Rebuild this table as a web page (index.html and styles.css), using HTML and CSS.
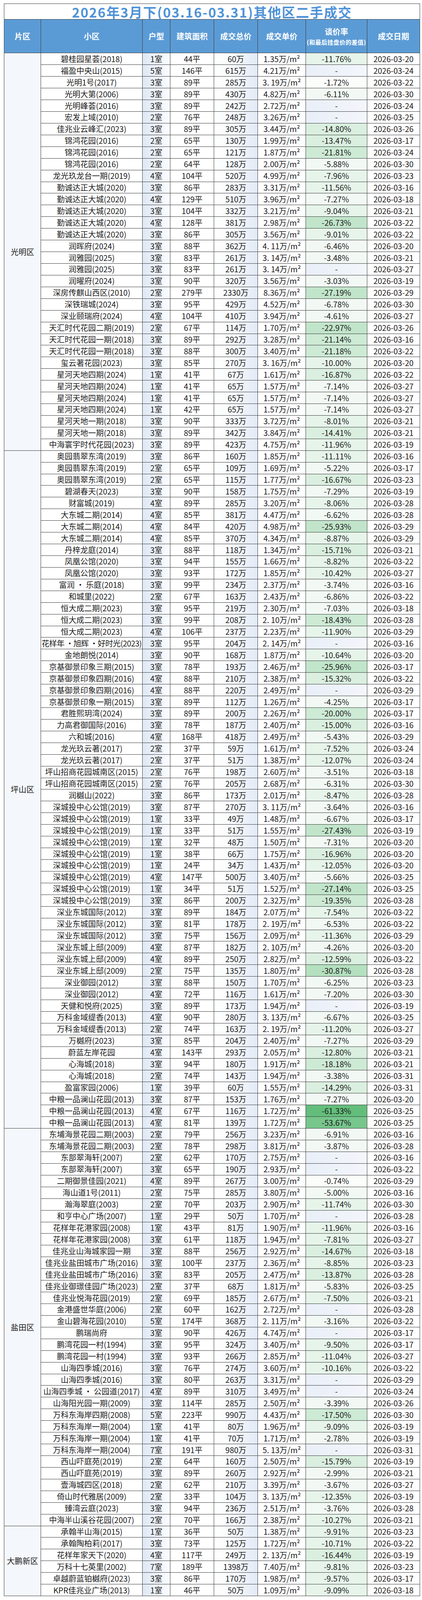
FILE: index.html
```html
<!DOCTYPE html>
<html lang="zh-CN">
<head>
<meta charset="utf-8">
<title>2026年3月下(03.16-03.31)其他区二手成交</title>
<link rel="stylesheet" href="styles.css">
</head>
<body>
<div class="sheet">
  <div class="title">2026年3月下(03.16-03.31)其他区二手成交</div>
  <div class="head">
    <div>片区</div><div>小区</div><div>户型</div><div>建筑面积</div><div>成交总价</div><div>成交单价</div>
    <div class="rate-h"><span>谈价率</span><small>(和最后挂盘价的差值)</small></div>
    <div>成交日期</div>
  </div>

  <section class="group">
    <div class="area">光明区</div>
    <div class="rows">
      <div class="row"><span>碧桂园星荟(2018)</span><span>1室</span><span>44平</span><span>60万</span><span>1.35万/m²</span><span class="d10">-11.76%</span><span>2026-03-20</span></div>
      <div class="row"><span>福盈中央山(2015)</span><span>5室</span><span>146平</span><span>615万</span><span>4.21万/m²</span><span class="na">-</span><span>2026-03-24</span></div>
      <div class="row"><span>光明1号(2017)</span><span>3室</span><span>89平</span><span>285万</span><span>3. 19万/m²</span><span class="d0">-1.72%</span><span>2026-03-22</span></div>
      <div class="row"><span>光明大第(2006)</span><span>3室</span><span>89平</span><span>430万</span><span>4.82万/m²</span><span class="d5">-6.11%</span><span>2026-03-30</span></div>
      <div class="row"><span>光明峰荟(2016)</span><span>3室</span><span>89平</span><span>242万</span><span>2.72万/m²</span><span class="na">-</span><span>2026-03-24</span></div>
      <div class="row"><span>宏发上域(2010)</span><span>2室</span><span>76平</span><span>248万</span><span>3.26万/m²</span><span class="na">-</span><span>2026-03-25</span></div>
      <div class="row"><span>佳兆业云峰汇(2023)</span><span>3室</span><span>89平</span><span>305万</span><span>3.44万/m²</span><span class="d15">-14.80%</span><span>2026-03-26</span></div>
      <div class="row"><span>锦鸿花园(2016)</span><span>2室</span><span>65平</span><span>130万</span><span>1.99万/m²</span><span class="d15">-13.47%</span><span>2026-03-17</span></div>
      <div class="row"><span>锦鸿花园(2016)</span><span>2室</span><span>65平</span><span>121万</span><span>1.87万/m²</span><span class="d20">-21.81%</span><span>2026-03-24</span></div>
      <div class="row"><span>锦鸿花园(2016)</span><span>2室</span><span>64平</span><span>128万</span><span>2.00万/m²</span><span class="d5">-5.88%</span><span>2026-03-30</span></div>
      <div class="row"><span>龙光玖龙台一期(2019)</span><span>4室</span><span>104平</span><span>520万</span><span>4.99万/m²</span><span class="d10">-7.96%</span><span>2026-03-23</span></div>
      <div class="row"><span>勤诚达正大城(2020)</span><span>3室</span><span>86平</span><span>283万</span><span>3.31万/m²</span><span class="d10">-11.56%</span><span>2026-03-16</span></div>
      <div class="row"><span>勤诚达正大城(2020)</span><span>4室</span><span>129平</span><span>510万</span><span>3.96万/m²</span><span class="d5">-7.27%</span><span>2026-03-18</span></div>
      <div class="row"><span>勤诚达正大城(2020)</span><span>3室</span><span>104平</span><span>332万</span><span>3.21万/m²</span><span class="d10">-9.04%</span><span>2026-03-21</span></div>
      <div class="row"><span>勤诚达正大城(2020)</span><span>4室</span><span>128平</span><span>381万</span><span>2.98万/m²</span><span class="d25">-26.73%</span><span>2026-03-22</span></div>
      <div class="row"><span>勤诚达正大城(2020)</span><span>3室</span><span>86平</span><span>305万</span><span>3.56万/m²</span><span class="d10">-9.01%</span><span>2026-03-22</span></div>
      <div class="row"><span>润晖府(2024)</span><span>3室</span><span>88平</span><span>362万</span><span>4. 11万/m²</span><span class="d5">-6.46%</span><span>2026-03-20</span></div>
      <div class="row"><span>润雅园(2025)</span><span>3室</span><span>83平</span><span>261万</span><span>3. 14万/m²</span><span class="d5">-3.48%</span><span>2026-03-21</span></div>
      <div class="row"><span>润雅园(2025)</span><span>3室</span><span>83平</span><span>261万</span><span>3. 14万/m²</span><span class="na">-</span><span>2026-03-27</span></div>
      <div class="row"><span>润曜府(2024)</span><span>3室</span><span>90平</span><span>320万</span><span>3.56万/m²</span><span class="d5">-3.03%</span><span>2026-03-19</span></div>
      <div class="row"><span>深房传麒山西区(2010)</span><span>2室</span><span>279平</span><span>2330万</span><span>8.36万/m²</span><span class="d25">-27.19%</span><span>2026-03-29</span></div>
      <div class="row"><span>深铁瑞城(2024)</span><span>3室</span><span>95平</span><span>429万</span><span>4.52万/m²</span><span class="d5">-6.78%</span><span>2026-03-30</span></div>
      <div class="row"><span>深业颐瑞府(2024)</span><span>4室</span><span>104平</span><span>410万</span><span>3.94万/m²</span><span class="d5">-4.61%</span><span>2026-03-27</span></div>
      <div class="row"><span>天汇时代花园二期(2019)</span><span>2室</span><span>67平</span><span>114万</span><span>1.70万/m²</span><span class="d25">-22.97%</span><span>2026-03-26</span></div>
      <div class="row"><span>天汇时代花园一期(2018)</span><span>3室</span><span>89平</span><span>292万</span><span>3.28万/m²</span><span class="d20">-21.14%</span><span>2026-03-16</span></div>
      <div class="row"><span>天汇时代花园一期(2018)</span><span>3室</span><span>88平</span><span>300万</span><span>3.40万/m²</span><span class="d20">-21.18%</span><span>2026-03-22</span></div>
      <div class="row"><span>玺云著花园(2023)</span><span>3室</span><span>85平</span><span>270万</span><span>3. 16万/m²</span><span class="d10">-10.00%</span><span>2026-03-20</span></div>
      <div class="row"><span>星河天地四期(2024)</span><span>1室</span><span>41平</span><span>67万</span><span>1.61万/m²</span><span class="d15">-16.87%</span><span>2026-03-22</span></div>
      <div class="row"><span>星河天地四期(2024)</span><span>1室</span><span>41平</span><span>65万</span><span>1.57万/m²</span><span class="d5">-7.14%</span><span>2026-03-27</span></div>
      <div class="row"><span>星河天地四期(2024)</span><span>1室</span><span>41平</span><span>65万</span><span>1.57万/m²</span><span class="d5">-7.14%</span><span>2026-03-27</span></div>
      <div class="row"><span>星河天地四期(2024)</span><span>1室</span><span>42平</span><span>65万</span><span>1.57万/m²</span><span class="d5">-7.14%</span><span>2026-03-27</span></div>
      <div class="row"><span>星河天地一期(2018)</span><span>3室</span><span>90平</span><span>333万</span><span>3.72万/m²</span><span class="d10">-8.01%</span><span>2026-03-21</span></div>
      <div class="row"><span>星河天地一期(2018)</span><span>3室</span><span>89平</span><span>342万</span><span>3.84万/m²</span><span class="d15">-14.41%</span><span>2026-03-21</span></div>
      <div class="row"><span>中海寰宇时代花园(2023)</span><span>3室</span><span>89平</span><span>423万</span><span>4.75万/m²</span><span class="d10">-11.96%</span><span>2026-03-19</span></div>
    </div>
  </section>

  <section class="group">
    <div class="area">坪山区</div>
    <div class="rows">
      <div class="row"><span>奥园翡翠东湾(2019)</span><span>3室</span><span>86平</span><span>160万</span><span>1.85万/m²</span><span class="d10">-11.11%</span><span>2026-03-16</span></div>
      <div class="row"><span>奥园翡翠东湾(2019)</span><span>2室</span><span>65平</span><span>109万</span><span>1.69万/m²</span><span class="d5">-5.22%</span><span>2026-03-17</span></div>
      <div class="row"><span>奥园翡翠东湾(2019)</span><span>2室</span><span>65平</span><span>115万</span><span>1.77万/m²</span><span class="d15">-16.67%</span><span>2026-03-23</span></div>
      <div class="row"><span>碧湖春天(2023)</span><span>3室</span><span>90平</span><span>158万</span><span>1.75万/m²</span><span class="d5">-7.29%</span><span>2026-03-19</span></div>
      <div class="row"><span>财富城(2019)</span><span>4室</span><span>89平</span><span>285万</span><span>3.20万/m²</span><span class="d10">-8.06%</span><span>2026-03-28</span></div>
      <div class="row"><span>大东城二期(2014)</span><span>4室</span><span>85平</span><span>381万</span><span>4.47万/m²</span><span class="d5">-6.62%</span><span>2026-03-28</span></div>
      <div class="row"><span>大东城二期(2014)</span><span>4室</span><span>84平</span><span>420万</span><span>4.98万/m²</span><span class="d25">-25.93%</span><span>2026-03-29</span></div>
      <div class="row"><span>大东城二期(2014)</span><span>4室</span><span>85平</span><span>370万</span><span>4.34万/m²</span><span class="d10">-8.87%</span><span>2026-03-29</span></div>
      <div class="row"><span>丹梓龙庭(2014)</span><span>3室</span><span>88平</span><span>118万</span><span>1.34万/m²</span><span class="d15">-15.71%</span><span>2026-03-21</span></div>
      <div class="row"><span>凤凰公馆(2020)</span><span>3室</span><span>94平</span><span>155万</span><span>1.66万/m²</span><span class="d10">-8.82%</span><span>2026-03-22</span></div>
      <div class="row"><span>凤凰公馆(2020)</span><span>3室</span><span>93平</span><span>172万</span><span>1.85万/m²</span><span class="d10">-10.42%</span><span>2026-03-27</span></div>
      <div class="row"><span>富润 · 乐庭(2018)</span><span>3室</span><span>99平</span><span>234万</span><span>2.37万/m²</span><span class="d5">-3.74%</span><span>2026-03-16</span></div>
      <div class="row"><span>和城里(2022)</span><span>2室</span><span>67平</span><span>163万</span><span>2.43万/m²</span><span class="d5">-6.86%</span><span>2026-03-22</span></div>
      <div class="row"><span>恒大成二期(2023)</span><span>3室</span><span>95平</span><span>219万</span><span>2.30万/m²</span><span class="d5">-7.03%</span><span>2026-03-18</span></div>
      <div class="row"><span>恒大成二期(2023)</span><span>3室</span><span>99平</span><span>208万</span><span>2. 10万/m²</span><span class="d20">-18.43%</span><span>2026-03-28</span></div>
      <div class="row"><span>恒大成二期(2023)</span><span>4室</span><span>106平</span><span>237万</span><span>2.23万/m²</span><span class="d10">-11.90%</span><span>2026-03-29</span></div>
      <div class="row"><span class="tight">花样年 ·旭辉 ·好时光(2023)</span><span>3室</span><span>95平</span><span>204万</span><span>2. 14万/m²</span><span class="na">-</span><span>2026-03-16</span></div>
      <div class="row"><span>金地朗悦(2014)</span><span>3室</span><span>90平</span><span>168万</span><span>1.87万/m²</span><span class="d10">-10.64%</span><span>2026-03-20</span></div>
      <div class="row"><span>京基御景印象三期(2015)</span><span>3室</span><span>78平</span><span>193万</span><span>2.46万/m²</span><span class="d25">-25.96%</span><span>2026-03-17</span></div>
      <div class="row"><span>京基御景印象四期(2016)</span><span>4室</span><span>88平</span><span>210万</span><span>2.38万/m²</span><span class="d15">-15.32%</span><span>2026-03-22</span></div>
      <div class="row"><span>京基御景印象四期(2016)</span><span>4室</span><span>88平</span><span>220万</span><span>2.49万/m²</span><span class="na">-</span><span>2026-03-29</span></div>
      <div class="row"><span>京基御景印象一期(2015)</span><span>3室</span><span>89平</span><span>112万</span><span>1.26万/m²</span><span class="d5">-4.25%</span><span>2026-03-17</span></div>
      <div class="row"><span>君胜熙玥湾(2024)</span><span>3室</span><span>89平</span><span>200万</span><span>2.26万/m²</span><span class="d20">-20.00%</span><span>2026-03-17</span></div>
      <div class="row"><span>力高君御国际(2016)</span><span>3室</span><span>78平</span><span>187万</span><span>2.40万/m²</span><span class="d15">-15.00%</span><span>2026-03-16</span></div>
      <div class="row"><span>六和城(2016)</span><span>4室</span><span>168平</span><span>418万</span><span>2.49万/m²</span><span class="d5">-5.43%</span><span>2026-03-29</span></div>
      <div class="row"><span>龙光玖云著(2017)</span><span>2室</span><span>37平</span><span>59万</span><span>1.61万/m²</span><span class="d10">-7.52%</span><span>2026-03-24</span></div>
      <div class="row"><span>龙光玖云著(2017)</span><span>2室</span><span>37平</span><span>51万</span><span>1.38万/m²</span><span class="d10">-12.07%</span><span>2026-03-24</span></div>
      <div class="row"><span>坪山招商花园城南区(2015)</span><span>2室</span><span>76平</span><span>198万</span><span>2.60万/m²</span><span class="d5">-3.51%</span><span>2026-03-18</span></div>
      <div class="row"><span>坪山招商花园城南区(2015)</span><span>2室</span><span>76平</span><span>205万</span><span>2.68万/m²</span><span class="d5">-6.31%</span><span>2026-03-30</span></div>
      <div class="row"><span>润樾山(2022)</span><span>3室</span><span>86平</span><span>173万</span><span>2.01万/m²</span><span class="d10">-8.47%</span><span>2026-03-28</span></div>
      <div class="row"><span>深城投中心公馆(2019)</span><span>3室</span><span>87平</span><span>270万</span><span>3. 11万/m²</span><span class="d5">-3.64%</span><span>2026-03-16</span></div>
      <div class="row"><span>深城投中心公馆(2019)</span><span>1室</span><span>33平</span><span>49万</span><span>1.48万/m²</span><span class="d5">-6.67%</span><span>2026-03-17</span></div>
      <div class="row"><span>深城投中心公馆(2019)</span><span>1室</span><span>33平</span><span>51万</span><span>1.55万/m²</span><span class="d25">-27.43%</span><span>2026-03-19</span></div>
      <div class="row"><span>深城投中心公馆(2019)</span><span>1室</span><span>32平</span><span>48万</span><span>1.50万/m²</span><span class="d5">-7.31%</span><span>2026-03-20</span></div>
      <div class="row"><span>深城投中心公馆(2019)</span><span>1室</span><span>38平</span><span>66万</span><span>1.75万/m²</span><span class="d15">-16.96%</span><span>2026-03-20</span></div>
      <div class="row"><span>深城投中心公馆(2019)</span><span>1室</span><span>24平</span><span>34万</span><span>1.43万/m²</span><span class="d10">-12.05%</span><span>2026-03-20</span></div>
      <div class="row"><span>深城投中心公馆(2019)</span><span>4室</span><span>147平</span><span>500万</span><span>3.40万/m²</span><span class="d5">-5.66%</span><span>2026-03-25</span></div>
      <div class="row"><span>深城投中心公馆(2019)</span><span>1室</span><span>34平</span><span>51万</span><span>1.52万/m²</span><span class="d25">-27.14%</span><span>2026-03-25</span></div>
      <div class="row"><span>深城投中心公馆(2019)</span><span>3室</span><span>86平</span><span>200万</span><span>2.32万/m²</span><span class="d20">-19.35%</span><span>2026-03-28</span></div>
      <div class="row"><span>深业东城国际(2012)</span><span>3室</span><span>89平</span><span>184万</span><span>2.07万/m²</span><span class="d10">-7.54%</span><span>2026-03-22</span></div>
      <div class="row"><span>深业东城国际(2012)</span><span>3室</span><span>81平</span><span>178万</span><span>2. 19万/m²</span><span class="d5">-6.53%</span><span>2026-03-22</span></div>
      <div class="row"><span>深业东城国际(2012)</span><span>3室</span><span>75平</span><span>156万</span><span>2.09万/m²</span><span class="d10">-11.36%</span><span>2026-03-29</span></div>
      <div class="row"><span>深业东城上邸(2009)</span><span>4室</span><span>87平</span><span>182万</span><span>2. 10万/m²</span><span class="d5">-4.26%</span><span>2026-03-20</span></div>
      <div class="row"><span>深业东城上邸(2009)</span><span>4室</span><span>89平</span><span>250万</span><span>2.82万/m²</span><span class="d15">-12.59%</span><span>2026-03-22</span></div>
      <div class="row"><span>深业东城上邸(2009)</span><span>2室</span><span>75平</span><span>135万</span><span>1.80万/m²</span><span class="d30">-30.87%</span><span>2026-03-28</span></div>
      <div class="row"><span>深业御园(2012)</span><span>3室</span><span>88平</span><span>150万</span><span>1.70万/m²</span><span class="d5">-6.25%</span><span>2026-03-23</span></div>
      <div class="row"><span>深业御园(2012)</span><span>4室</span><span>72平</span><span>116万</span><span>1.61万/m²</span><span class="d5">-7.20%</span><span>2026-03-30</span></div>
      <div class="row"><span>天健和悦府(2025)</span><span>3室</span><span>89平</span><span>173万</span><span>1.94万/m²</span><span class="na">-</span><span>2026-03-19</span></div>
      <div class="row"><span>万科金域缇香(2013)</span><span>4室</span><span>90平</span><span>280万</span><span>3. 13万/m²</span><span class="d5">-6.67%</span><span>2026-03-25</span></div>
      <div class="row"><span>万科金域缇香(2013)</span><span>2室</span><span>74平</span><span>163万</span><span>2. 19万/m²</span><span class="d10">-11.20%</span><span>2026-03-27</span></div>
      <div class="row"><span>万樾府(2023)</span><span>3室</span><span>85平</span><span>204万</span><span>2.40万/m²</span><span class="d5">-7.27%</span><span>2026-03-29</span></div>
      <div class="row"><span>蔚蓝左岸花园</span><span>4室</span><span>143平</span><span>293万</span><span>2.05万/m²</span><span class="d15">-12.80%</span><span>2026-03-21</span></div>
      <div class="row"><span>心海城(2018)</span><span>3室</span><span>94平</span><span>180万</span><span>1.91万/m²</span><span class="d20">-18.18%</span><span>2026-03-21</span></div>
      <div class="row"><span>心海城(2018)</span><span>2室</span><span>74平</span><span>143万</span><span>1.94万/m²</span><span class="d5">-3.38%</span><span>2026-03-31</span></div>
      <div class="row"><span>盈富家园(2006)</span><span>1室</span><span>39平</span><span>60万</span><span>1.55万/m²</span><span class="d15">-14.29%</span><span>2026-03-31</span></div>
      <div class="row"><span>中粮一品澜山花园(2013)</span><span>3室</span><span>87平</span><span>153万</span><span>1.76万/m²</span><span class="d5">-7.27%</span><span>2026-03-20</span></div>
      <div class="row"><span>中粮一品澜山花园(2013)</span><span>4室</span><span>67平</span><span>116万</span><span>1.72万/m²</span><span class="d60">-61.33%</span><span>2026-03-25</span></div>
      <div class="row"><span>中粮一品澜山花园(2013)</span><span>4室</span><span>81平</span><span>139万</span><span>1.72万/m²</span><span class="d55">-53.67%</span><span>2026-03-25</span></div>
    </div>
  </section>

  <section class="group">
    <div class="area">盐田区</div>
    <div class="rows">
      <div class="row"><span>东埔海景花园二期(2003)</span><span>2室</span><span>79平</span><span>256万</span><span>3.23万/m²</span><span class="d5">-6.91%</span><span>2026-03-16</span></div>
      <div class="row"><span>东埔海景花园二期(2003)</span><span>2室</span><span>78平</span><span>298万</span><span>3.81万/m²</span><span class="d5">-3.87%</span><span>2026-03-28</span></div>
      <div class="row"><span>东部翠海轩(2007)</span><span>2室</span><span>62平</span><span>170万</span><span>2.75万/m²</span><span class="na">-</span><span>2026-03-16</span></div>
      <div class="row"><span>东部翠海轩(2007)</span><span>3室</span><span>65平</span><span>190万</span><span>2.93万/m²</span><span class="na">-</span><span>2026-03-22</span></div>
      <div class="row"><span>二期御景佳园(2021)</span><span>4室</span><span>89平</span><span>267万</span><span>3.00万/m²</span><span class="d0">-0.74%</span><span>2026-03-29</span></div>
      <div class="row"><span>海山道1号(2011)</span><span>2室</span><span>75平</span><span>285万</span><span>3.80万/m²</span><span class="d5">-5.00%</span><span>2026-03-16</span></div>
      <div class="row"><span>瀚海翠庭(2003)</span><span>2室</span><span>70平</span><span>203万</span><span>2.90万/m²</span><span class="d10">-11.74%</span><span>2026-03-30</span></div>
      <div class="row"><span>和亨中心广场(2007)</span><span>1室</span><span>29平</span><span>50万</span><span>1.70万/m²</span><span class="na">-</span><span>2026-03-28</span></div>
      <div class="row"><span>花样年花港家园(2008)</span><span>1室</span><span>43平</span><span>81万</span><span>1.90万/m²</span><span class="d10">-11.96%</span><span>2026-03-16</span></div>
      <div class="row"><span>花样年花港家园(2008)</span><span>3室</span><span>61平</span><span>118万</span><span>1.94万/m²</span><span class="d10">-7.81%</span><span>2026-03-27</span></div>
      <div class="row"><span>佳兆业山海城家园一期</span><span>3室</span><span>88平</span><span>256万</span><span>2.92万/m²</span><span class="d15">-14.67%</span><span>2026-03-18</span></div>
      <div class="row"><span>佳兆业盐田城市广场(2016)</span><span>3室</span><span>100平</span><span>237万</span><span>2.36万/m²</span><span class="d10">-8.85%</span><span>2026-03-23</span></div>
      <div class="row"><span>佳兆业盐田城市广场(2016)</span><span>3室</span><span>83平</span><span>205万</span><span>2.47万/m²</span><span class="d15">-13.87%</span><span>2026-03-28</span></div>
      <div class="row"><span>佳兆业御璟佳园广场(2023)</span><span>2室</span><span>37平</span><span>68万</span><span>1.81万/m²</span><span class="d5">-5.83%</span><span>2026-03-25</span></div>
      <div class="row"><span>佳兆业悦海花园(2019)</span><span>2室</span><span>69平</span><span>185万</span><span>2.67万/m²</span><span class="d10">-7.50%</span><span>2026-03-21</span></div>
      <div class="row"><span>金港盛世华庭(2006)</span><span>2室</span><span>60平</span><span>162万</span><span>2.72万/m²</span><span class="na">-</span><span>2026-03-28</span></div>
      <div class="row"><span>金山碧海花园(2010)</span><span>5室</span><span>174平</span><span>368万</span><span>2. 11万/m²</span><span class="d5">-3.16%</span><span>2026-03-22</span></div>
      <div class="row"><span>鹏瑞尚府</span><span>3室</span><span>90平</span><span>426万</span><span>4.74万/m²</span><span class="na">-</span><span>2026-03-17</span></div>
      <div class="row"><span>鹏湾花园一村(1994)</span><span>3室</span><span>95平</span><span>324万</span><span>3.40万/m²</span><span class="d10">-9.50%</span><span>2026-03-17</span></div>
      <div class="row"><span>鹏湾花园一村(1994)</span><span>3室</span><span>93平</span><span>266万</span><span>2.85万/m²</span><span class="d10">-11.04%</span><span>2026-03-27</span></div>
      <div class="row"><span>山海四季城(2016)</span><span>3室</span><span>76平</span><span>274万</span><span>3.60万/m²</span><span class="d10">-10.16%</span><span>2026-03-22</span></div>
      <div class="row"><span>山海四季城(2016)</span><span>3室</span><span>80平</span><span>263万</span><span>3.31万/m²</span><span class="na">-</span><span>2026-03-29</span></div>
      <div class="row"><span>山海四季城 · 公园道(2017)</span><span>4室</span><span>89平</span><span>310万</span><span>3.49万/m²</span><span class="na">-</span><span>2026-03-24</span></div>
      <div class="row"><span>山海阳光园一期(2009)</span><span>3室</span><span>114平</span><span>285万</span><span>2.50万/m²</span><span class="d5">-3.39%</span><span>2026-03-26</span></div>
      <div class="row"><span>万科东海岸四期(2008)</span><span>5室</span><span>223平</span><span>990万</span><span>4.43万/m²</span><span class="d20">-17.50%</span><span>2026-03-30</span></div>
      <div class="row"><span>万科东海岸一期(2004)</span><span>1室</span><span>41平</span><span>80万</span><span>1.96万/m²</span><span class="d10">-9.09%</span><span>2026-03-19</span></div>
      <div class="row"><span>万科东海岸一期(2004)</span><span>1室</span><span>41平</span><span>70万</span><span>1.71万/m²</span><span class="d5">-2.78%</span><span>2026-03-19</span></div>
      <div class="row"><span>万科东海岸一期(2004)</span><span>7室</span><span>191平</span><span>980万</span><span>5. 13万/m²</span><span class="na">-</span><span>2026-03-31</span></div>
      <div class="row"><span>西山吓庭苑(2019)</span><span>2室</span><span>64平</span><span>160万</span><span>2.50万/m²</span><span class="d15">-15.79%</span><span>2026-03-19</span></div>
      <div class="row"><span>西山吓庭苑(2019)</span><span>3室</span><span>89平</span><span>260万</span><span>2.92万/m²</span><span class="d5">-2.99%</span><span>2026-03-21</span></div>
      <div class="row"><span>壹海城四区(2018)</span><span>2室</span><span>62平</span><span>210万</span><span>3.39万/m²</span><span class="d5">-3.67%</span><span>2026-03-27</span></div>
      <div class="row"><span>倚山时代雅居(2009)</span><span>2室</span><span>33平</span><span>104万</span><span>3. 13万/m²</span><span class="d10">-12.35%</span><span>2026-03-19</span></div>
      <div class="row"><span>臻湾云庭(2023)</span><span>3室</span><span>94平</span><span>236万</span><span>2.51万/m²</span><span class="d5">-3.76%</span><span>2026-03-28</span></div>
      <div class="row"><span>中海半山溪谷花园(2007)</span><span>2室</span><span>70平</span><span>166万</span><span>2.38万/m²</span><span class="d10">-10.27%</span><span>2026-03-21</span></div>
    </div>
  </section>

  <section class="group">
    <div class="area">大鹏新区</div>
    <div class="rows">
      <div class="row"><span>承翰半山海(2015)</span><span>1室</span><span>36平</span><span>50万</span><span>1.38万/m²</span><span class="d10">-9.91%</span><span>2026-03-23</span></div>
      <div class="row"><span>承翰陶柏莉(2017)</span><span>3室</span><span>73平</span><span>125万</span><span>1.72万/m²</span><span class="d10">-10.71%</span><span>2026-03-22</span></div>
      <div class="row"><span>花样年家天下(2020)</span><span>4室</span><span>117平</span><span>249万</span><span>2. 13万/m²</span><span class="d15">-16.44%</span><span>2026-03-19</span></div>
      <div class="row"><span>万科十七英里(2002)</span><span>7室</span><span>189平</span><span>1398万</span><span>7.40万/m²</span><span class="d10">-9.81%</span><span>2026-03-23</span></div>
      <div class="row"><span>卓越蔚蓝铂樾府(2023)</span><span>3室</span><span>86平</span><span>170万</span><span>1.98万/m²</span><span class="d10">-9.57%</span><span>2026-03-17</span></div>
      <div class="row"><span>KPR佳兆业广场(2013)</span><span>1室</span><span>46平</span><span>50万</span><span>1.09万/m²</span><span class="d10">-9.09%</span><span>2026-03-18</span></div>
    </div>
  </section>
</div>
</body>
</html>
```

FILE: styles.css
```css
/* One vertical unit = 1/4417 of the window height, so the whole sheet
   keeps the reference proportions whatever height the window really has. */
:root {
  --u: calc(100vh / 4417);
  --line: #3a3a3a;
}

* { box-sizing: border-box; }

html, body {
  margin: 0;
  padding: 0;
  background: #ffffff;
}

body {
  font-family: "Noto Sans CJK SC", "Noto Sans", "DejaVu Sans", sans-serif;
  color: #1c1c1c;
}

.sheet {
  margin: calc(var(--u) * 10) 0 0 10px;
  width: 1065px;
  border: 1px solid var(--line);
  border-bottom: none;
}

.title {
  height: calc(var(--u) * 43);
  border-bottom: 1px solid var(--line);
  display: flex;
  align-items: center;
  justify-content: center;
  font-size: 34px;
  font-weight: 700;
  letter-spacing: 2px;
  color: #4f93d8;
  line-height: 1;
  padding-top: 2px;
}

.head {
  display: grid;
  grid-template-columns: 94px 260px 71px 112px 112px 123px 157px 1fr;
  height: calc(var(--u) * 93);
  background: #5b9bd5;
  border-bottom: 1px solid var(--line);
}

.head > div {
  display: flex;
  flex-direction: column;
  align-items: center;
  justify-content: center;
  color: #ffffff;
  font-size: 20px;
  font-weight: 700;
  border-right: 1px solid var(--line);
  line-height: 1.2;
}

.head > div:last-child { border-right: none; }

.head .rate-h small {
  font-size: 15px;
  font-weight: 700;
  margin-top: 6px;
  letter-spacing: 0.5px;
}

.group {
  display: flex;
}

.area {
  width: 94px;
  flex: none;
  display: flex;
  align-items: center;
  justify-content: center;
  font-size: 20px;
  background: #f4f7fc;
  border-right: 1px solid var(--line);
  border-bottom: 1px solid var(--line);
}

.rows {
  flex: 1;
}

.row {
  display: grid;
  grid-template-columns: 260px 71px 112px 112px 123px 157px 1fr;
  height: calc(var(--u) * 32.27);
  border-bottom: 1px solid var(--line);
}

.row > span {
  display: flex;
  align-items: center;
  justify-content: center;
  font-size: 20px;
  line-height: 1;
  white-space: nowrap;
  border-right: 1px solid var(--line);
  background: #ffffff;
}

.row > span:last-child { border-right: none; }

.row > span.tight { letter-spacing: -0.6px; }

/* 户型 column */
.row > span:nth-child(2) {
  background: linear-gradient(90deg, #dfe8f5 0%, #eef3fa 55%, #fbfcfe 100%);
}

/* 成交总价 column */
.row > span:nth-child(4) {
  background: linear-gradient(90deg, #ffffff 0%, #f5f8fc 50%, #e2eaf6 100%);
}

/* 谈价率 colour scale (white → green) */
.row > span.na  { background: linear-gradient(90deg, #e9eff8 0%, #f3f6fb 100%); }
.row > span.d0  { background: #fbfdfb; }
.row > span.d5  { background: #f2f9f4; }
.row > span.d10 { background: #e6f4ea; }
.row > span.d15 { background: #daefdf; }
.row > span.d20 { background: #cdead5; }
.row > span.d25 { background: #c1e5ca; }
.row > span.d30 { background: #b4e0bf; }
.row > span.d55 { background: #77c68c; }
.row > span.d60 { background: #63be7b; }
```
